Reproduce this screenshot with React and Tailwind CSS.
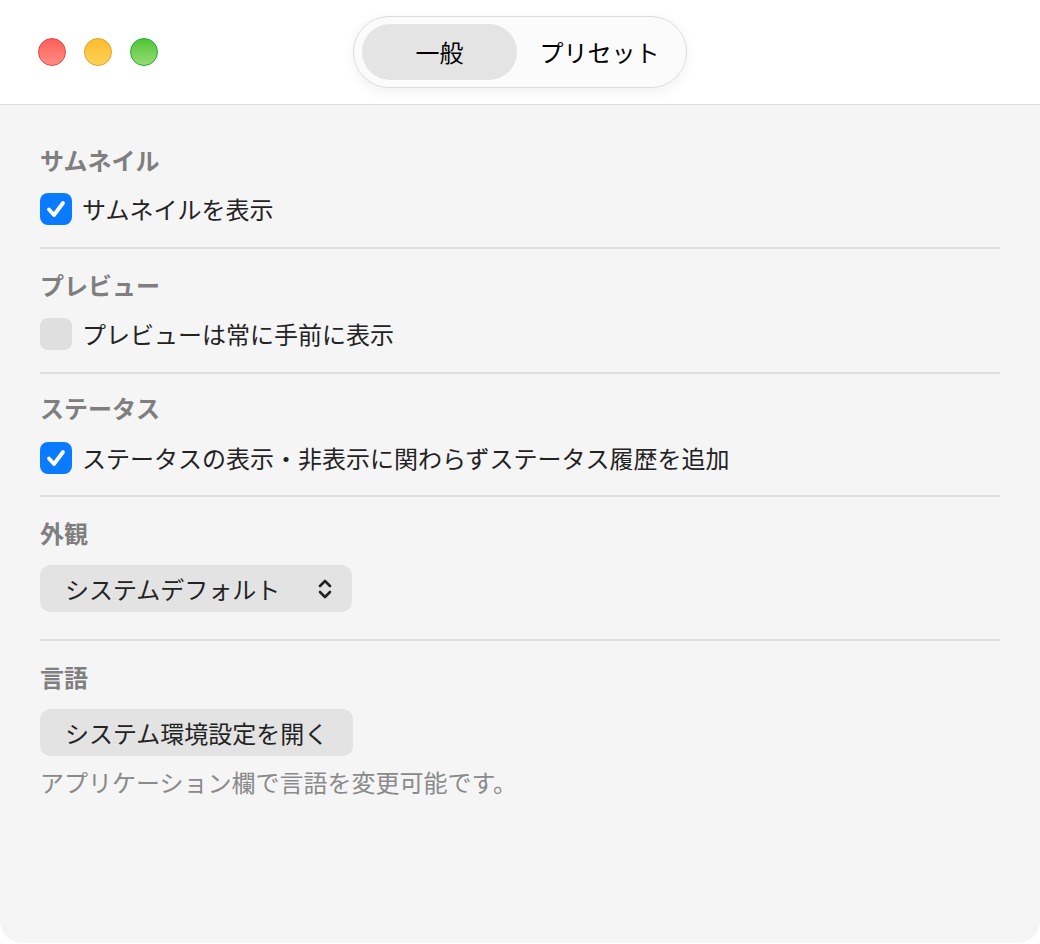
import { useState } from "react";

function Checkbox({ checked, onChange }) {
    return (
        <button
            type="button"
            onClick={onChange}
            className={
                checked
                    ? "w-8 h-8 rounded-[8px] bg-[#0a7aff] flex items-center justify-center shrink-0"
                    : "w-8 h-8 rounded-[8px] bg-[#dfdfdf] flex items-center justify-center shrink-0"
            }
        >
            {checked && (
                <svg width="24" height="24" viewBox="0 0 24 24" fill="none">
                    <path d="M5 12.5 L10 18 L19 6" stroke="white" strokeWidth="3.8" strokeLinecap="round" strokeLinejoin="round" />
                </svg>
            )}
        </button>
    );
}

function SectionTitle({ children }) {
    return <h3 className="text-[24px] leading-8 font-bold text-[#7f7f7f]">{children}</h3>;
}

function Divider() {
    return <div className="h-[2px] bg-[#dedede]" />;
}

export default function App() {
    const [tab, setTab] = useState("general");
    const [thumb, setThumb] = useState(true);
    const [preview, setPreview] = useState(false);
    const [status, setStatus] = useState(true);

    return (
        <div
            className="w-[1040px] h-[943px] flex flex-col bg-[#f5f5f5] rounded-b-[22px] overflow-hidden text-[#232323]"
            style={{ fontFamily: '"Noto Sans CJK JP", "Noto Sans", sans-serif' }}
        >
            {/* title bar */}
            <div className="h-[105px] shrink-0 bg-white border-b border-[#dcdcdc] flex items-center relative">
                <div className="flex items-center gap-[18px] pl-[38px]">
                    <span className="w-7 h-7 rounded-full border border-[#e0443e] bg-linear-to-b from-[#ff5f57] to-[#ff8c86]" />
                    <span className="w-7 h-7 rounded-full border border-[#dea123] bg-linear-to-b from-[#febc2e] to-[#ffd255]" />
                    <span className="w-7 h-7 rounded-full border border-[#1aab29] bg-linear-to-b from-[#4fc52f] to-[#95dc74]" />
                </div>
                <div className="absolute left-[353px] top-4 w-[334px] h-[72px] rounded-full bg-[#fbfbfb] border border-[#dddddd] shadow-[0_4px_14px_rgba(0,0,0,0.06)] flex items-center pl-2 pr-1">
                    <button
                        onClick={() => setTab("general")}
                        className={
                            tab === "general"
                                ? "w-[155px] h-14 rounded-full bg-[#e4e4e4] text-[24px] text-black"
                                : "w-[155px] h-14 rounded-full text-[24px] text-black"
                        }
                    >
                        一般
                    </button>
                    <button
                        onClick={() => setTab("presets")}
                        className={
                            tab === "presets"
                                ? "flex-1 h-14 rounded-full bg-[#e4e4e4] text-[24px] text-black"
                                : "flex-1 h-14 rounded-full text-[24px] text-black"
                        }
                    >
                        プリセット
                    </button>
                </div>
            </div>

            {/* content */}
            <div className="px-10 pt-[39px]">
                <SectionTitle>サムネイル</SectionTitle>
                <label className="flex items-center gap-[10px] mt-[17px] h-8">
                    <Checkbox checked={thumb} onChange={() => setThumb(!thumb)} />
                    <span className="text-[24px]">サムネイルを表示</span>
                </label>
                <div className="pt-[22px] pb-[20px]">
                    <Divider />
                </div>

                <SectionTitle>プレビュー</SectionTitle>
                <label className="flex items-center gap-[10px] mt-[17px] h-8">
                    <Checkbox checked={preview} onChange={() => setPreview(!preview)} />
                    <span className="text-[24px]">プレビューは常に手前に表示</span>
                </label>
                <div className="pt-[22px] pb-[18px]">
                    <Divider />
                </div>

                <SectionTitle>ステータス</SectionTitle>
                <label className="flex items-center gap-[10px] mt-[18px] h-8">
                    <Checkbox checked={status} onChange={() => setStatus(!status)} />
                    <span className="text-[24px]">ステータスの表示・非表示に関わらずステータス履歴を追加</span>
                </label>
                <div className="pt-[21px] pb-[20px]">
                    <Divider />
                </div>

                <SectionTitle>外観</SectionTitle>
                <div className="mt-[16px] w-[312px] h-[47px] rounded-[10px] bg-[#e3e3e3] flex items-center justify-between pl-[25px] pr-[19px]">
                    <span className="text-[24px]">システムデフォルト</span>
                    <svg width="16" height="22" viewBox="0 0 16 22" fill="none">
                        <path d="M3 8 L8 3 L13 8" stroke="#222" strokeWidth="2.6" strokeLinecap="round" strokeLinejoin="round" />
                        <path d="M3 14 L8 19 L13 14" stroke="#222" strokeWidth="2.6" strokeLinecap="round" strokeLinejoin="round" />
                    </svg>
                </div>
                <div className="pt-[27px] pb-[20px]">
                    <Divider />
                </div>

                <SectionTitle>言語</SectionTitle>
                <button className="mt-[16px] w-[313px] h-[47px] rounded-[10px] bg-[#e3e3e3] flex items-center pl-[25px] text-[24px]">
                    システム環境設定を開く
                </button>
                <p className="mt-[8px] text-[24px] text-[#8a8a8a]">アプリケーション欄で言語を変更可能です。</p>
            </div>
        </div>
    );
}
